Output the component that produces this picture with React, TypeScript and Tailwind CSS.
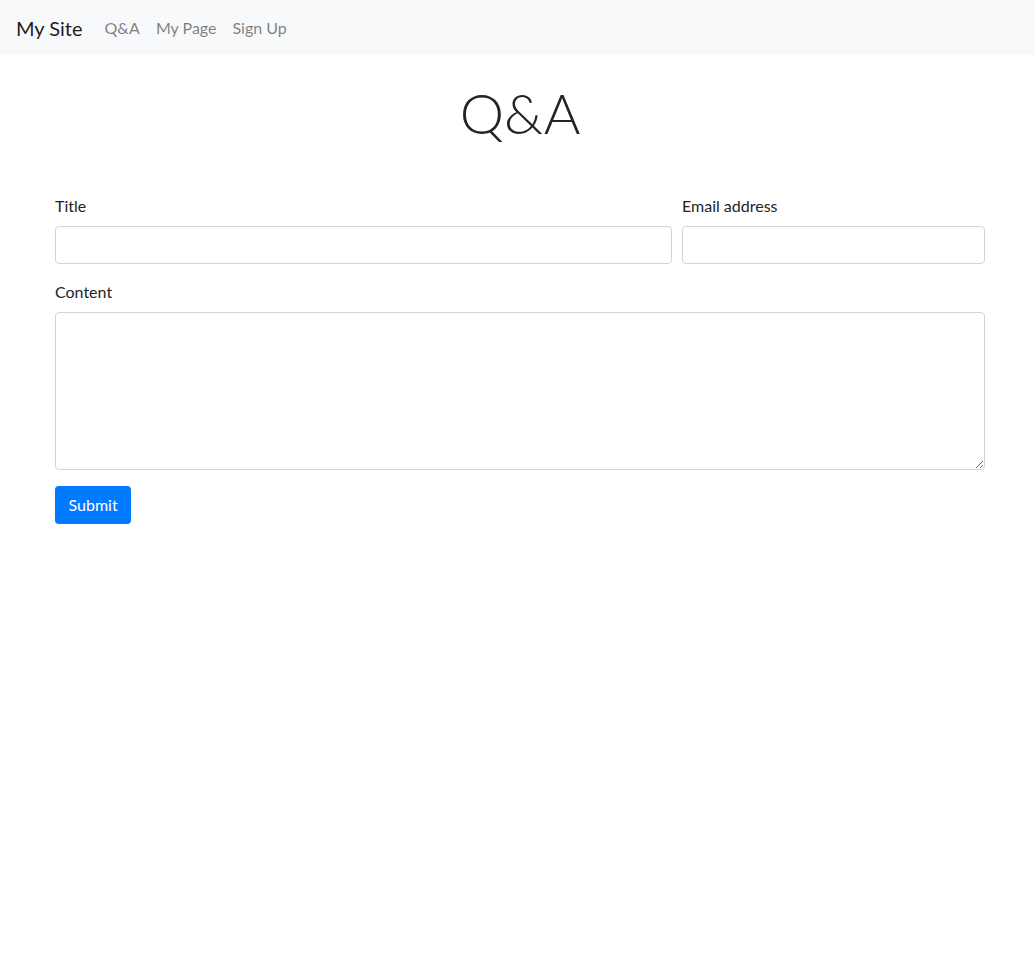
const font = "font-['Lato','Noto_Sans',sans-serif]";

export default function App() {
  return (
    <div className={`min-h-screen bg-white text-[#212529] ${font}`}>
      {/* Navbar */}
      <nav className="flex h-[55px] items-center bg-[#f8f9fa] px-4">
        <a href="#" className="mr-[14px] text-[20px] leading-[30px] text-black/90">
          My Site
        </a>
        <div className="flex text-[16px] leading-6">
          <a href="#" className="px-2 py-2 text-black/50">Q&amp;A</a>
          <a href="#" className="px-2 py-2 text-black/50">My Page</a>
          <a href="#" className="px-2 py-2 text-black/50">Sign Up</a>
        </div>
      </nav>

      <main className="ml-[55px] w-[930px]">
        <h1 className="mt-6 mb-12 text-center text-[56px] font-light leading-[1.2]">Q&amp;A</h1>

        <form className="text-[16px] leading-6">
          <div className="grid grid-cols-[617px_303px] gap-[10px]">
            <div className="mb-4">
              <label className="mb-2 block">Title</label>
              <input
                type="text"
                className="block h-[38px] w-full rounded border border-[#ced4da] px-3 outline-none"
              />
            </div>
            <div className="mb-4">
              <label className="mb-2 block">Email address</label>
              <input
                type="email"
                className="block h-[38px] w-full rounded border border-[#ced4da] px-3 outline-none"
              />
            </div>
          </div>

          <div className="mb-4">
            <label className="mb-2 block">Content</label>
            <textarea
              rows={6}
              className="block h-[158px] w-full rounded border border-[#ced4da] px-3 py-1.5 outline-none"
            />
          </div>

          <button
            type="submit"
            className="h-[38px] rounded bg-[#007bff] px-[13.5px] text-white"
          >
            Submit
          </button>
        </form>
      </main>
    </div>
  );
}
